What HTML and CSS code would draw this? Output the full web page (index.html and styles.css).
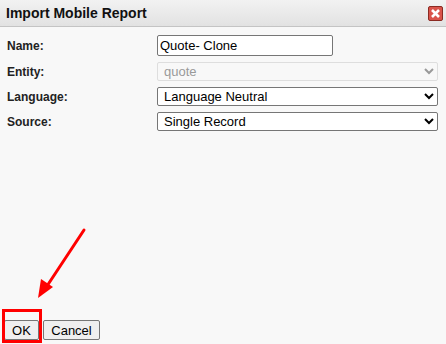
FILE: index.html
```html
<!DOCTYPE html>
<html lang="en">
<head>
    <meta charset="UTF-8">
    <meta name="viewport" content="width=device-width, initial-scale=1.0">
    <title>Import Mobile Report</title>
    <link rel="stylesheet" href="styles.css">
</head>
<body>
    <div class="dialog">
        <div class="titlebar">
            <span class="title">Import Mobile Report</span>
            <span class="close">
                <svg width="15" height="15" viewBox="0 0 15 15">
                    <rect x="0.5" y="0.5" width="14" height="14" rx="1.5" fill="#d9534a" stroke="#8a2a22"/>
                    <path d="M4 4 L11 11 M11 4 L4 11" stroke="#fff" stroke-width="2.6"/>
                </svg>
            </span>
        </div>

        <form class="fields">
            <label for="name">Name:</label>
            <input type="text" id="name" class="ctl ctl-name" value="Quote- Clone">

            <label for="entity">Entity:</label>
            <select id="entity" class="ctl" disabled>
                <option>quote</option>
            </select>

            <label for="lang">Language:</label>
            <select id="lang" class="ctl">
                <option>Language Neutral</option>
            </select>

            <label for="source">Source:</label>
            <select id="source" class="ctl">
                <option>Single Record</option>
            </select>
        </form>

        <div class="footer">
            <button type="button" class="btn btn-ok">OK</button>
            <button type="button" class="btn btn-cancel">Cancel</button>
        </div>
    </div>

    <!-- annotation -->
    <div class="mark"></div>
    <svg class="arrow" width="446" height="344" viewBox="0 0 446 344">
        <line x1="84" y1="230" x2="47" y2="286" stroke="#ff0000" stroke-width="3" stroke-linecap="round"/>
        <polygon points="38,298 41,279 53,287" fill="#ff0000"/>
    </svg>
</body>
</html>
```

FILE: styles.css
```css
body {
    margin: 0;
    height: 344px;
    background-color: #f8f8f8;
    font-family: "Liberation Sans", Arial, sans-serif;
    overflow: hidden;
}

.dialog {
    height: 344px;
    display: flex;
    flex-direction: column;
}

.titlebar {
    height: 27px;
    box-sizing: border-box;
    display: flex;
    align-items: center;
    justify-content: space-between;
    padding: 0 3px 0 6px;
    background: linear-gradient(#f2f2f2, #e2e2e2);
    border-bottom: 1px solid #c4c4c4;
}

.title {
    font-size: 14px;
    font-weight: bold;
    color: #111;
}

.close {
    display: flex;
    margin-top: 1px;
}

.fields {
    display: grid;
    grid-template-columns: 150px 281px;
    row-gap: 6px;
    align-items: center;
    padding: 8px 0 0 7px;
    margin: 0;
}

label {
    font-size: 12px;
    font-weight: bold;
    color: #222;
}

.ctl {
    box-sizing: border-box;
    height: 19px;
    margin: 0;
    font-family: "Liberation Sans", Arial, sans-serif;
    font-size: 13px;
    color: #000;
    background-color: #fff;
    border: 1px solid #767676;
    border-radius: 2px;
    padding: 0 2px;
}

.ctl-name {
    width: 176px;
    height: 21px;
}

select.ctl:disabled {
    color: #9a9a9a;
    background-color: #f8f8f8;
    border-color: #dedede;
    opacity: 1;
}

.footer {
    margin-top: auto;
    display: flex;
    gap: 4px;
    padding: 0 0 4px 4px;
}

.btn {
    height: 20px;
    box-sizing: border-box;
    padding: 0 6px;
    font-family: "Liberation Sans", Arial, sans-serif;
    font-size: 13px;
    color: #000;
    background-color: #efefef;
    border: 1px solid #767676;
    border-radius: 2px;
}

.btn-ok {
    width: 35px;
}

.btn-cancel {
    width: 57px;
}

.mark {
    position: absolute;
    left: 2px;
    top: 309px;
    width: 34px;
    height: 28px;
    border: 3px solid #ff0000;
}

.arrow {
    position: absolute;
    left: 0;
    top: 0;
    pointer-events: none;
}
```
